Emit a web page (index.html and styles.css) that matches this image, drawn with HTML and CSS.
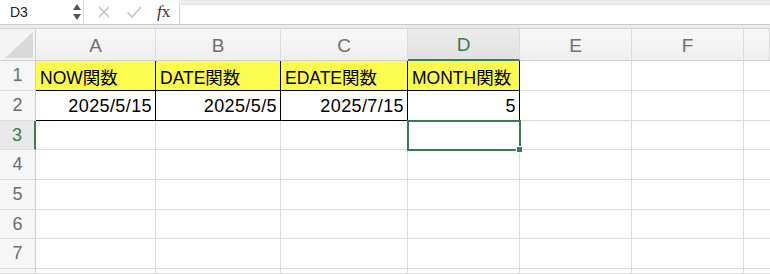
FILE: index.html
```html
<!DOCTYPE html>
<html lang="ja">
<head>
<meta charset="utf-8">
<link rel="stylesheet" href="styles.css">
</head>
<body>
<div class="app">
  <div class="toolbar">
    <div class="namebox">
      <span class="name">D3</span>
      <svg class="spin" width="10" height="20" viewBox="0 0 10 20"><path d="M1 8 L5 2 L9 8 Z" fill="#555"/><path d="M1 12 L5 18 L9 12 Z" fill="#555"/></svg>
    </div>
    <div class="tools">
      <svg class="tool" width="14" height="14" viewBox="0 0 14 14"><path d="M2 2 L12 12 M12 2 L2 12" stroke="#c4c4c4" stroke-width="1.6" fill="none"/></svg>
      <svg class="tool" width="16" height="14" viewBox="0 0 16 14"><path d="M1.5 7.5 L6 12 L15 2" stroke="#c4c4c4" stroke-width="1.6" fill="none"/></svg>
      <span class="fx"><i>f</i>x</span>
    </div>
    <div class="formula"></div>
  </div>
  <div class="sheet">
    <div class="corner"><svg width="36" height="32" viewBox="0 0 36 32"><path d="M33 3 L33 29 L5 29 Z" fill="#d9d9d9"/></svg></div>
    <div class="ch">A</div>
    <div class="ch">B</div>
    <div class="ch">C</div>
    <div class="ch sel">D</div>
    <div class="ch">E</div>
    <div class="ch">F</div>
    <div class="ch last"></div>

    <div class="rh">1</div>
    <div class="c hd b">NOW関数</div>
    <div class="c hd b">DATE関数</div>
    <div class="c hd b">EDATE関数</div>
    <div class="c hd b">MONTH関数</div>
    <div class="c"></div>
    <div class="c"></div>
    <div class="c last"></div>

    <div class="rh">2</div>
    <div class="c num b">2025/5/15</div>
    <div class="c num b">2025/5/5</div>
    <div class="c num b">2025/7/15</div>
    <div class="c num b">5</div>
    <div class="c"></div>
    <div class="c"></div>
    <div class="c last"></div>

    <div class="rh sel">3</div>
    <div class="c"></div>
    <div class="c"></div>
    <div class="c"></div>
    <div class="c active"></div>
    <div class="c"></div>
    <div class="c"></div>
    <div class="c last"></div>

    <div class="rh">4</div>
    <div class="c"></div><div class="c"></div><div class="c"></div><div class="c"></div><div class="c"></div><div class="c"></div><div class="c last"></div>
    <div class="rh">5</div>
    <div class="c"></div><div class="c"></div><div class="c"></div><div class="c"></div><div class="c"></div><div class="c"></div><div class="c last"></div>
    <div class="rh">6</div>
    <div class="c"></div><div class="c"></div><div class="c"></div><div class="c"></div><div class="c"></div><div class="c"></div><div class="c last"></div>
    <div class="rh">7</div>
    <div class="c"></div><div class="c"></div><div class="c"></div><div class="c"></div><div class="c"></div><div class="c"></div><div class="c last"></div>
    <div class="rh"></div>
    <div class="c"></div><div class="c"></div><div class="c"></div><div class="c"></div><div class="c"></div><div class="c"></div><div class="c last"></div>
  </div>
</div>
</body>
</html>
```
FILE: styles.css
```css
html, body {
  margin: 0;
  padding: 0;
  background: #ffffff;
}
body {
  width: 770px;
  height: 274px;
  overflow: hidden;
  font-family: "Liberation Sans", "Noto Sans CJK JP", sans-serif;
  color: #000;
}
.app {
  display: flex;
  flex-direction: column;
}
.toolbar {
  height: 29px;
  box-sizing: border-box;
  display: flex;
  align-items: flex-start;
  background: #ececec;
  border-bottom: 1px solid #d2d2d2;
}
.namebox {
  width: 84px;
  height: 25px;
  box-sizing: border-box;
  background: #fff;
  border-right: 1px solid #d6d6d6;
  border-bottom: 1px solid #c9c9c9;
  display: flex;
  align-items: center;
  justify-content: space-between;
  padding: 0 1px 0 10px;
}
.name {
  font-size: 14px;
  color: #222;
}
.spin {
  display: block;
}
.tools {
  width: 95px;
  height: 25px;
  background: #fff;
  border-bottom: 1px solid #c9c9c9;
  box-sizing: border-box;
  display: flex;
  align-items: center;
  padding-left: 13px;
  gap: 15px;
}
.tool {
  display: block;
}
.fx {
  font-family: "Liberation Serif", serif;
  font-size: 17px;
  color: #333;
  letter-spacing: -1px;
}
.fx i {
  font-style: italic;
  margin-right: 1px;
}
.formula {
  flex: 1;
  height: 21px;
  margin-top: 4px;
  background: #fff;
  border-left: 1px solid #d2d2d2;
  border-top: 1px solid #e2e2e2;
  border-bottom: 1px solid #c9c9c9;
  box-sizing: border-box;
}
.sheet {
  display: grid;
  grid-template-columns: 36px 120px 125px 127px 112px 112px 112px 26px;
  grid-template-rows: 32px 30px 30px 29px 30px 30px 29px 30px 5px;
}
.corner {
  background: #f4f4f4;
  border-right: 1px solid #d0d0d0;
  border-bottom: 1px solid #d0d0d0;
  box-sizing: border-box;
  overflow: hidden;
}
.corner svg {
  display: block;
}
.ch {
  background: linear-gradient(#f8f8f8, #efefef);
  border-right: 1px solid #dcdcdc;
  border-bottom: 1px solid #d0d0d0;
  box-sizing: border-box;
  display: flex;
  align-items: center;
  justify-content: center;
  font-size: 19px;
  color: #707070;
  padding-top: 2px;
}
.ch.sel {
  background: linear-gradient(#ececec, #e2e2e2);
  color: #3c7a51;
  border-bottom: 2px solid #3c7a51;
}
.rh {
  background: #f6f6f6;
  border-right: 1px solid #d0d0d0;
  border-bottom: 1px solid #dcdcdc;
  box-sizing: border-box;
  display: flex;
  align-items: center;
  justify-content: center;
  font-size: 18px;
  color: #6c6c6c;
}
.rh.sel {
  background: #e9e9e9;
  color: #3c7a51;
  border-right: 2px solid #3c7a51;
}
.c {
  border-right: 1px solid #dadada;
  border-bottom: 1px solid #dadada;
  box-sizing: border-box;
  display: flex;
  align-items: center;
  font-size: 18px;
  white-space: nowrap;
  overflow: visible;
}
.c.last {
  border-right: none;
}
.c.b {
  border-right-color: #000;
  border-bottom-color: #000;
}
.hd {
  background: #fcfc4e;
  padding-left: 4px;
  padding-top: 2px;
  font-size: 17.5px;
}
.num {
  justify-content: flex-end;
  padding-right: 3px;
  padding-top: 1px;
  letter-spacing: 0.4px;
}
.active {
  position: relative;
  outline: 2px solid #3c7a51;
  outline-offset: -1px;
}
.active::after {
  content: "";
  position: absolute;
  right: -4px;
  bottom: -4px;
  width: 5px;
  height: 5px;
  background: #3c7a51;
  border: 1px solid #fff;
}
```
